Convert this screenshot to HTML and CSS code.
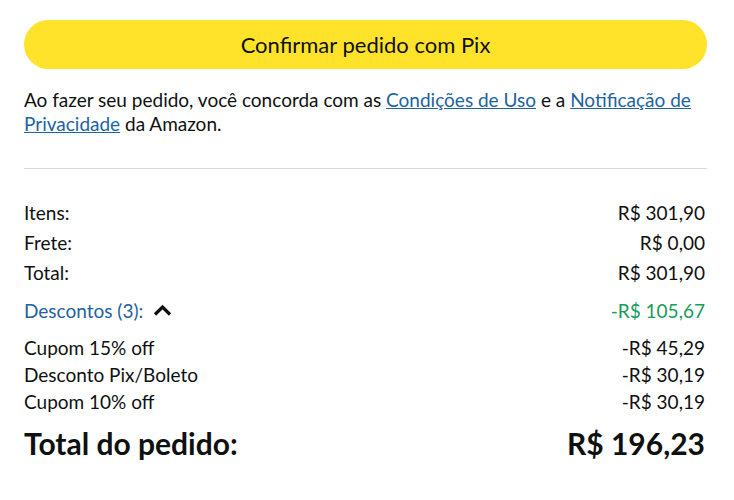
FILE: index.html
```html
<!DOCTYPE html>
<html>
<head>
    <title>Resumo do pedido</title>
    <link rel="stylesheet" href="styles.css">
</head>
<body>
    <div class="summary">
        <button class="place-order">Confirmar pedido com Pix</button>

        <p class="terms">
            Ao fazer seu pedido, você concorda com as <a href="#">Condições de Uso</a> e a <a href="#">Notificação de Privacidade</a> da Amazon.
        </p>

        <hr class="divider">

        <div class="rows">
            <div class="row"><span>Itens:</span><span>R$ 301,90</span></div>
            <div class="row"><span>Frete:</span><span>R$ 0,00</span></div>
            <div class="row"><span>Total:</span><span>R$ 301,90</span></div>
        </div>

        <div class="row discount-head">
            <span class="discount-label">
                Descontos (3):
                <svg class="chevron" width="19" height="12" viewBox="0 0 19 12">
                    <path d="M2 10.5 L9.5 3 L17 10.5" fill="none" stroke="#0f1111" stroke-width="3.2"/>
                </svg>
            </span>
            <span class="savings">-R$ 105,67</span>
        </div>

        <div class="discounts">
            <div class="row"><span>Cupom 15% off</span><span>-R$ 45,29</span></div>
            <div class="row"><span>Desconto Pix/Boleto</span><span>-R$ 30,19</span></div>
            <div class="row"><span>Cupom 10% off</span><span>-R$ 30,19</span></div>
        </div>

        <div class="row grand-total"><span>Total do pedido:</span><span>R$ 196,23</span></div>
    </div>
</body>
</html>
```

FILE: styles.css
```css
body {
    margin: 0;
    background: #ffffff;
    color: #0f1111;
    font-family: 'Lato', 'Liberation Sans', sans-serif;
    font-size: 19px;
}

.summary {
    padding: 20px 29px 0 24px;
}

.place-order {
    display: block;
    width: calc(100% + 2px);
    height: 49px;
    margin: 0;
    border: none;
    border-radius: 25px;
    background: #ffe32b;
    color: #0f1111;
    font-family: inherit;
    font-size: 22px;
}

.terms {
    margin: 19px 0 0 0;
    line-height: 24px;
}

.terms a {
    color: #2162a1;
}

.divider {
    border: none;
    border-top: 1px solid #d5d9d9;
    margin: 32px -2px 0 0;
}

.rows {
    margin-top: 28px;
}

.row {
    display: flex;
    justify-content: space-between;
    align-items: center;
    height: 30px;
}

.discount-head {
    height: 38px;
    margin-top: 4px;
}

.discount-label {
    color: #2162a1;
    display: flex;
    align-items: center;
    gap: 10px;
}

.savings {
    color: #179c5b;
}

.discounts {
    margin-top: 5px;
}

.discounts .row {
    height: 27px;
}

.grand-total {
    height: 44px;
    margin-top: 6px;
    font-size: 30px;
    font-weight: 700;
}
```
